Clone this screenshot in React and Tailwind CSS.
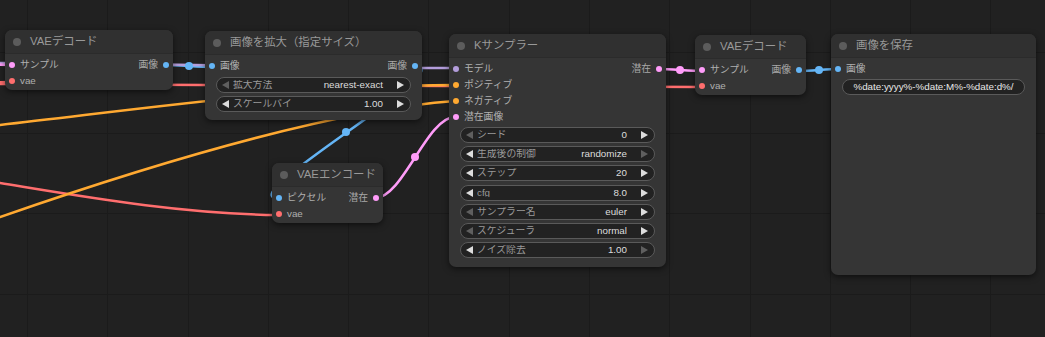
import React from 'react';

const COLORS = {
    latent: 'bg-[#FF9CF9]',
    vae: 'bg-[#FF6E6E]',
    image: 'bg-[#64B5F6]',
    model: 'bg-[#B39DDB]',
    cond: 'bg-[#FFA931]',
};

// canvas grid lines (the graph's background)
const gridX = [27, 107, 188, 268, 348, 428, 509, 589, 669, 750, 830, 910, 990];
const gridY = [52, 133, 213, 294];

function Arrow({ dir, dim }) {
    const fill = dim ? '#5f5f5f' : '#dddddd';
    return (
        <svg width="7" height="8" viewBox="0 0 7 8" className="shrink-0">
            {dir === 'left'
                ? <polygon points="7,0 7,8 0,4" fill={fill} />
                : <polygon points="0,0 0,8 7,4" fill={fill} />}
        </svg>
    );
}

function Widget({ label, value, dimL, dimR }) {
    return (
        <div className="h-4 mx-[11px] rounded-full border border-[#5a5a5a] bg-[#222222] flex items-center pl-[5px] pr-[6px]">
            <Arrow dir="left" dim={dimL} />
            <span className="ml-[4px] text-[#999999] flex-1 truncate">{label}</span>
            <span className="text-[#dddddd] mr-[14px]">{value}</span>
            <Arrow dir="right" dim={dimR} />
        </div>
    );
}

function Slot({ color, label, out }) {
    if (out) {
        return (
            <div className="flex items-center gap-[5px]">
                <span className="text-[#a8a8a8]">{label}</span>
                <span className={`w-[6px] h-[6px] rounded-full ${color}`} />
            </div>
        );
    }
    return (
        <div className="flex items-center gap-[5px]">
            <span className={`w-[6px] h-[6px] rounded-full ${color}`} />
            <span className="text-[#b0b0b0]">{label}</span>
        </div>
    );
}

function Row({ left, right }) {
    return (
        <div className="h-4 flex items-center justify-between px-[4px]">
            {left || <span />}
            {right || <span />}
        </div>
    );
}

function Node({ className, title, children }) {
    return (
        <div className={`absolute rounded-[7px] bg-[#353535] shadow-[0_2px_6px_rgba(0,0,0,0.55)] overflow-hidden flex flex-col ${className}`}>
            <div className="h-6 shrink-0 bg-[#303030] border-b border-[#2b2b2b] flex items-center pl-[8px] gap-[9px]">
                <span className="w-2 h-2 rounded-full bg-[#5c5c5c]" />
                <span className="text-[11.4px] text-[#999999] whitespace-nowrap">{title}</span>
            </div>
            <div className="pt-[3px] flex flex-col">{children}</div>
        </div>
    );
}

function Wires() {
    return (
        <svg className="absolute inset-0" width="1045" height="337" viewBox="0 0 1045 337" fill="none">
            <g strokeWidth="2.5" strokeLinecap="round">
                <path d="M -20 83 L 12 82" stroke="#FF6E6E" />
                <path d="M -20 84 C 300 84, 450 87, 702 87" stroke="#FF6E6E" />
                <path d="M 0 183 C 80 196, 180 214, 278 215" stroke="#FF6E6E" />
                <path d="M 0 125 C 150 108, 300 86, 455 85" stroke="#FFA931" />
                <path d="M 0 217 C 150 165, 330 110, 455 101" stroke="#FFA931" />
                <path d="M 166 65 C 178 65, 200 67, 212 67" stroke="#64B5F6" />
                <path d="M -20 63 C 150 63, 300 68, 455 68" stroke="#B39DDB" />
                <path d="M -20 64 L 12 65" stroke="#FF9CF9" />
                <path d="M 415 67 C 462 67, 231 198, 278 198" stroke="#64B5F6" />
                <path d="M 375 198 C 403 198, 427 117, 455 117" stroke="#FF9CF9" />
                <path d="M 659 69 C 670 69, 691 71, 702 71" stroke="#FF9CF9" />
                <path d="M 800 71 C 810 71, 828 69, 838 69" stroke="#64B5F6" />
            </g>
            <circle cx="189" cy="66" r="4" fill="#64B5F6" />
            <circle cx="346" cy="132" r="4" fill="#64B5F6" />
            <circle cx="415" cy="157" r="4" fill="#FF9CF9" />
            <circle cx="680" cy="70" r="4" fill="#FF9CF9" />
            <circle cx="819" cy="70" r="4" fill="#64B5F6" />
        </svg>
    );
}

export default function App() {
    return (
        <div className="relative w-[1045px] h-[337px] overflow-hidden bg-[#212121] font-['Liberation_Sans','Noto_Sans_CJK_JP',sans-serif] text-[9.8px] leading-none select-none">
            <svg className="absolute inset-0" width="1045" height="337">
                {gridX.map((x) => <line key={'x' + x} x1={x + 0.5} y1="0" x2={x + 0.5} y2="337" stroke="#1b1b1b" strokeWidth="1" />)}
                {gridY.map((y) => <line key={'y' + y} x1="0" y1={y + 0.5} x2="1045" y2={y + 0.5} stroke="#1b1b1b" strokeWidth="1" />)}
            </svg>

            <Wires />

            {/* VAE decode (left) */}
            <Node className="left-[5px] top-[30px] w-[168px] h-[60px]" title="VAEデコード">
                <Row left={<Slot color={COLORS.latent} label="サンプル" />} right={<Slot out color={COLORS.image} label="画像" />} />
                <Row left={<Slot color={COLORS.vae} label="vae" />} />
            </Node>

            {/* upscale */}
            <Node className="left-[205px] top-[31px] w-[217px] h-[89px]" title="画像を拡大（指定サイズ）">
                <Row left={<Slot color={COLORS.image} label="画像" />} right={<Slot out color={COLORS.image} label="画像" />} />
                <div className="mt-[3px] flex flex-col gap-[3px]">
                    <Widget label="拡大方法" value="nearest-exact" dimL />
                    <Widget label="スケールバイ" value="1.00" />
                </div>
            </Node>

            {/* VAE encode */}
            <Node className="left-[272px] top-[163px] w-[111px] h-[60px]" title="VAEエンコード">
                <Row left={<Slot color={COLORS.image} label="ピクセル" />} right={<Slot out color={COLORS.latent} label="潜在" />} />
                <Row left={<Slot color={COLORS.vae} label="vae" />} />
            </Node>

            {/* KSampler */}
            <Node className="left-[449px] top-[34px] w-[217px] h-[233px]" title="Kサンプラー">
                <Row left={<Slot color={COLORS.model} label="モデル" />} right={<Slot out color={COLORS.latent} label="潜在" />} />
                <Row left={<Slot color={COLORS.cond} label="ポジティブ" />} />
                <Row left={<Slot color={COLORS.cond} label="ネガティブ" />} />
                <Row left={<Slot color={COLORS.latent} label="潜在画像" />} />
                <div className="mt-[2px] flex flex-col gap-[3.2px]">
                    <Widget label="シード" value="0" dimL />
                    <Widget label="生成後の制御" value="randomize" dimR />
                    <Widget label="ステップ" value="20" />
                    <Widget label="cfg" value="8.0" />
                    <Widget label="サンプラー名" value="euler" dimL />
                    <Widget label="スケジューラ" value="normal" dimL />
                    <Widget label="ノイズ除去" value="1.00" dimR />
                </div>
            </Node>

            {/* VAE decode (right) */}
            <Node className="left-[695px] top-[35px] w-[111px] h-[60px]" title="VAEデコード">
                <Row left={<Slot color={COLORS.latent} label="サンプル" />} right={<Slot out color={COLORS.image} label="画像" />} />
                <Row left={<Slot color={COLORS.vae} label="vae" />} />
            </Node>

            {/* save image */}
            <Node className="left-[831px] top-[34px] w-[205px] h-[241px]" title="画像を保存">
                <Row left={<Slot color={COLORS.image} label="画像" />} />
                <div className="mt-[2px] h-4 mx-[11px] rounded-full border border-[#5a5a5a] bg-[#222222] flex items-center justify-center text-[#e8e8e8] whitespace-nowrap">
                    %date:yyyy%-%date:M%-%date:d%/
                </div>
            </Node>
        </div>
    );
}
